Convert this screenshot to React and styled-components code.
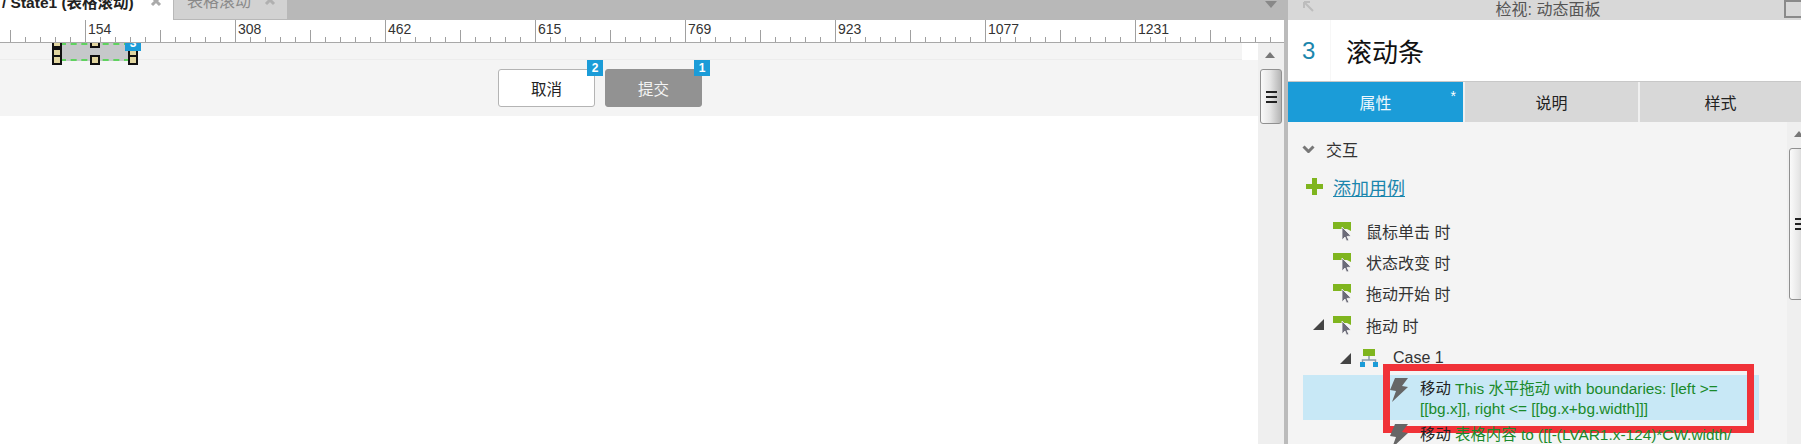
import React from "react";
import styled, { createGlobalStyle } from "styled-components";

const Global = createGlobalStyle`
  html, body { margin: 0; padding: 0; background: #fff; }
  body { font-family: "Liberation Sans", "Noto Sans CJK SC", sans-serif; }
  * { box-sizing: border-box; }
`;

const Root = styled.div`
  width: 1801px; height: 444px; overflow: hidden; display: flex; color: #222;
`;
const EditorPane = styled.div`
  width: 1288px; flex: none; display: flex; flex-direction: column;
`;
const TabBar = styled.div`
  height: 20px; flex: none; display: flex; background: #b8b8b8; overflow: hidden;
`;
const DocTab = styled.div`
  height: ${p => (p.$active ? 20 : 19)}px;
  width: ${p => p.$width}px;
  margin-right: 1px;
  flex: none;
  display: flex; align-items: flex-end; justify-content: space-between;
  padding: 0 ${p => p.$padRight}px 7px ${p => p.$padLeft}px;
  background: ${p => (p.$active ? "#fff" : "#d2d2d2")};
  color: ${p => (p.$active ? "#222" : "#8a8a8a")};
  font-size: ${p => (p.$active ? 15.5 : 16)}px; line-height: 20px; font-weight: ${p => (p.$active ? 700 : 400)};
  white-space: nowrap; overflow: hidden;
`;
const CloseGlyph = styled.svg`
  width: 12px; height: 12px; flex: none; margin-bottom: ${p => p.$lift}px; color: ${p => p.$color};
`;
const TabCaret = styled.svg`
  width: 12px; height: 7px; margin: 1px 11px 0 auto; flex: none;
`;
const EditorBody = styled.div`
  flex: 1; min-height: 0; display: flex; flex-direction: column;
  border-right: 4px solid #bbb;
`;
const RulerBar = styled.svg`
  display: block; width: 1284px; height: 23px; flex: none; position: relative; z-index: 2; background: #fff;
`;
const CanvasRow = styled.div`
  flex: 1; min-height: 0; display: flex;
`;
const Canvas = styled.div`
  flex: 1; min-width: 0; background: #fff;
`;
const WidgetBand = styled.div`
  position: relative; width: 1242px; height: 17px; background: #f4f4f4; border-bottom: 1px solid #ececec;
`;
const ButtonBand = styled.div`
  height: 56px; background: #f4f4f4; display: flex; gap: 10px; padding: 9px 0 0 498px;
`;
const Selection = styled.div`
  position: absolute; left: 60px; top: 0; width: 70px; height: 18px; background: #c6c8ca;
  border-top: 2px dashed #5fd35f; border-bottom: 2px dashed #5fd35f;
`;
const Handle = styled.span`
  position: absolute; left: ${p => p.$x}px; top: ${p => p.$y}px; width: 10px; height: 10px;
  background: #e2d6a0; border: 2px solid #111;
`;
const Badge = styled.span`
  position: absolute; width: 16px; height: 16px; background: #1b9cd8; color: #fff;
  font-size: 12px; font-weight: 700; line-height: 16px; text-align: center;
  right: ${p => p.$right}px; top: ${p => p.$top}px;
`;
const ActionButton = styled.div`
  position: relative; width: 97px; height: 38px; border-radius: 3px;
  display: flex; align-items: center; justify-content: center; font-size: 15.5px;
  background: ${p => (p.$primary ? "#929292" : "#fff")};
  color: ${p => (p.$primary ? "#f4f4f4" : "#222")};
  border: 1px solid ${p => (p.$primary ? "#929292" : "#b4b4b4")};
`;
const ScrollTrack = styled.div`
  width: 26px; flex: none; background: #efefef; position: relative; padding: 26px 0 0 2px;
`;
const ScrollArrow = styled.svg`
  position: absolute; left: 7px; top: 9px; width: 10px; height: 6px;
`;
const ScrollThumb = styled.div`
  width: 22px; height: ${p => p.$height}px; border: 1px solid #909090; border-radius: 3px;
  background: linear-gradient(90deg, #fafafa 0%, #e6e6e6 45%, #b4b4b4 100%);
  display: flex; flex-direction: column; align-items: center; justify-content: center; gap: 3px;
`;
const GripLine = styled.span`
  display: block; width: 11px; height: 2px; background: #222;
`;
const InspectorPane = styled.div`
  flex: 1; min-width: 0; display: flex; flex-direction: column; background: #f4f4f4;
`;
const InspectorHeader = styled.div`
  height: 20px; flex: none; background: #d8d8d8; display: grid;
  grid-template-columns: 1fr auto 1fr; align-items: end; padding: 0 8px 0 15px; overflow: hidden;
  font-size: 16px; line-height: 20px; color: #555;
`;
const HeaderTitle = styled.span`
  margin-bottom: 7px; white-space: nowrap;
`;
const BackGlyph = styled.svg`
  width: 11px; height: 12px; margin-bottom: 14px;
`;
const Restore = styled.span`
  justify-self: end; width: 17px; height: 18px; border: 2px solid #8a8a8a; border-right: none;
  margin: 0 -8px 9px 0;
`;
const TitleRow = styled.div`
  height: 62px; flex: none; background: #fff; display: flex; align-items: center;
  border-bottom: 1px solid #c8c8c8;
`;
const TitleNumber = styled.div`
  width: 43px; height: 100%; padding-left: 14px; color: #1b86ad; font-size: 24px;
  display: flex; align-items: center; border-right: 1px solid #f7f7f7;
`;
const TitleText = styled.div`
  margin-left: 15px; font-size: 26px; color: #111;
`;
const PanelTabs = styled.div`
  height: 40px; flex: none; display: grid; grid-template-columns: 175px 173px 1fr; gap: 2px;
  background: #f0f0f0;
`;
const PanelTab = styled.div`
  position: relative; display: flex; align-items: center; justify-content: center; font-size: 16px;
  background: ${p => (p.$active ? "#1b9cd8" : "#d8d8d8")};
  color: ${p => (p.$active ? "#eef8fd" : "#222")};
`;
const Asterisk = styled.span`
  position: absolute; right: 7px; top: 7px; color: #fff; font-size: 14px; line-height: 14px;
`;
const InspectorBody = styled.div`
  flex: 1; min-height: 0; display: flex; margin-right: -12px;
`;
const Content = styled.div`
  flex: 1; min-width: 0; padding-top: 17px;
`;
const SectionHeader = styled.div`
  height: 20px; display: flex; align-items: center; gap: 11px; padding-left: 14px;
  font-size: 16px; color: #333;
`;
const Chevron = styled.svg`
  width: 13px; height: 8px; flex: none;
`;
const AddRow = styled.div`
  height: 25px; margin-top: 15px; display: flex; align-items: center; gap: 10px; padding-left: 18px;
`;
const AddIcon = styled.svg`
  width: 17px; height: 17px; flex: none;
`;
const AddLink = styled.span`
  font-size: 18px; color: #1b86ad; text-decoration: underline;
`;
const EventList = styled.div`
  margin-top: 16px;
`;
const TreeRow = styled.div`
  height: 31.4px; display: flex; align-items: center; padding-left: ${p => p.$indent}px;
  margin-top: ${p => p.$gap || 0}px;
  font-size: 16px; color: #333; white-space: nowrap;
`;
const TreeSlot = styled.div`
  width: 20px; flex: none; display: flex; align-items: center;
`;
const Triangle = styled.svg`
  width: 11px; height: 11px; display: block;
`;
const EventGlyph = styled.svg`
  width: 18px; height: 20px; flex: none; margin-right: 15px;
`;
const ActionRow = styled.div`
  position: relative; margin: ${p => (p.$selected ? "1px 28px 1px 15px" : "0 28px 0 15px")};
  min-height: 45px; display: flex; align-items: flex-start; padding: 4px 20px 0 87px;
  background: ${p => (p.$selected ? "#c8e8f6" : "transparent")};
`;
const BoltGlyph = styled.svg`
  width: 18px; height: 24px; flex: none; margin: -1px 12px 0 0;
`;
const ActionText = styled.div`
  font-size: 15.4px; line-height: 20px; color: #1a8a2a;
  white-space: ${p => (p.$single ? "nowrap" : "normal")};
`;
const ActionVerb = styled.span`
  color: #222;
`;
const RedFrame = styled.div`
  position: absolute; left: 80px; top: -11px; width: 371px; height: 69px;
  border: 7px solid #f03238; pointer-events: none;
`;

function Close({ color, lift }) {
  return (
    <CloseGlyph $color={color} $lift={lift} viewBox="0 0 12 12">
      <path d="M2 2 L10 10 M10 2 L2 10" stroke="currentColor" strokeWidth="3" />
    </CloseGlyph>
  );
}

function Ruler() {
  const ticks = [];
  for (let x = 10; x < 1284; x += 15) {
    const step = Math.round((x - 85) / 15);
    const mod = ((step % 10) + 10) % 10;
    const major = mod === 0;
    const mid = mod === 5;
    const y1 = major ? 0 : mid ? 10 : 17;
    ticks.push(<line key={x} x1={x + 0.5} x2={x + 0.5} y1={y1} y2="22" stroke="#a0a0a0" />);
  }
  const labels = [154, 308, 462, 615, 769, 923, 1077, 1231];
  return (
    <RulerBar viewBox="0 0 1284 23">
      {ticks}
      {labels.map((l, i) => (
        <text key={l} x={88 + i * 150} y="14" fontSize="14" fill="#333" fontFamily="Liberation Sans, sans-serif">{l}</text>
      ))}
      <line x1="0" x2="1284" y1="22.5" y2="22.5" stroke="#a8a8a8" />
    </RulerBar>
  );
}

function Scrollbar({ thumb }) {
  return (
    <ScrollTrack>
      <ScrollArrow viewBox="0 0 10 6"><polygon points="5,0 10,6 0,6" fill="#777" /></ScrollArrow>
      <ScrollThumb $height={thumb}>
        <GripLine /><GripLine /><GripLine />
      </ScrollThumb>
    </ScrollTrack>
  );
}

function EventIcon() {
  return (
    <EventGlyph viewBox="0 0 18 20">
      <polygon points="0,1 18,1 18,10 14,8 0,8" fill="#7fb51e" />
      <path d="M9 6 L18 15 L14 15.5 L16 19.5 L13.5 20 L12 16 L9 19 Z" fill="#6b6b78" stroke="#f4f4f4" strokeWidth="0.8" />
    </EventGlyph>
  );
}

function CaseIcon() {
  return (
    <EventGlyph viewBox="0 0 18 20">
      <rect x="3" y="1" width="12" height="7" fill="#7fb51e" />
      <path d="M9 8 V12 M2.5 15 V12 H15.5 V15" stroke="#8a9aa8" strokeWidth="1.5" fill="none" />
      <rect x="0" y="14" width="5" height="5" fill="#1b9cd8" />
      <rect x="13" y="14" width="5" height="5" fill="#1b9cd8" />
    </EventGlyph>
  );
}

function Bolt() {
  return (
    <BoltGlyph viewBox="0 0 18 24">
      <polygon points="5,0 18,0 12,8 18,9 2,24 6,13 0,12" fill="#666" />
    </BoltGlyph>
  );
}

function Tri() {
  return (
    <Triangle viewBox="0 0 11 11"><polygon points="11,0 11,11 0,11" fill="#444" /></Triangle>
  );
}

const events = ["鼠标单击 时", "状态改变 时", "拖动开始 时"];

export default function App() {
  return (
    <Root>
      <Global />
      <EditorPane>
        <TabBar>
          <DocTab $active $width={173} $padLeft={2} $padRight={11}>
            <span>/ State1 (表格滚动)</span>
            <Close color="#aaa" lift={6} />
          </DocTab>
          <DocTab $width={113} $padLeft={13} $padRight={11}>
            <span>表格滚动</span>
            <Close color="#b0b0b0" lift={6} />
          </DocTab>
          <TabCaret viewBox="0 0 12 7"><polygon points="0,0 12,0 6,7" fill="#888" /></TabCaret>
        </TabBar>
        <EditorBody>
          <Ruler />
          <CanvasRow>
            <Canvas>
              <WidgetBand>
                <Selection>
                  <Handle $x={-8} $y={-7} />
                  <Handle $x={-8} $y={3} />
                  <Handle $x={-8} $y={10} />
                  <Handle $x={30} $y={-7} />
                  <Handle $x={30} $y={10} />
                  <Handle $x={68} $y={-7} />
                  <Handle $x={68} $y={3} />
                  <Handle $x={68} $y={10} />
                  <Badge $right={-11} $top={-10}>3</Badge>
                </Selection>
              </WidgetBand>
              <ButtonBand>
                <ActionButton>取消<Badge $right={-9} $top={-10}>2</Badge></ActionButton>
                <ActionButton $primary>提交<Badge $right={-9} $top={-10}>1</Badge></ActionButton>
              </ButtonBand>
            </Canvas>
            <Scrollbar thumb={55} />
          </CanvasRow>
        </EditorBody>
      </EditorPane>
      <InspectorPane>
        <InspectorHeader>
          <BackGlyph viewBox="0 0 11 12"><path d="M1 1 L10 10 M1 1 V7 M1 1 H7" stroke="#bdbdbd" strokeWidth="2" fill="none" /></BackGlyph>
          <HeaderTitle>检视: 动态面板</HeaderTitle>
          <Restore />
        </InspectorHeader>
        <TitleRow>
          <TitleNumber>3</TitleNumber>
          <TitleText>滚动条</TitleText>
        </TitleRow>
        <PanelTabs>
          <PanelTab $active>属性<Asterisk>*</Asterisk></PanelTab>
          <PanelTab>说明</PanelTab>
          <PanelTab>样式</PanelTab>
        </PanelTabs>
        <InspectorBody>
          <Content>
            <SectionHeader>
              <Chevron viewBox="0 0 13 8"><path d="M1.5 1.5 L6.5 6.5 L11.5 1.5" stroke="#777" strokeWidth="3" fill="none" /></Chevron>
              交互
            </SectionHeader>
            <AddRow>
              <AddIcon viewBox="0 0 17 17"><path d="M6 0 H11 V6 H17 V11 H11 V17 H6 V11 H0 V6 H6 Z" fill="#7fb51e" /></AddIcon>
              <AddLink>添加用例</AddLink>
            </AddRow>
            <EventList>
              {events.map(e => (
                <TreeRow key={e} $indent={25}>
                  <TreeSlot />
                  <EventIcon />
                  {e}
                </TreeRow>
              ))}
              <TreeRow $indent={25}>
                <TreeSlot><Tri /></TreeSlot>
                <EventIcon />
                拖动 时
              </TreeRow>
              <TreeRow $indent={52} $gap={2}>
                <TreeSlot><Tri /></TreeSlot>
                <CaseIcon />
                Case 1
              </TreeRow>
            </EventList>
            <ActionRow $selected>
              <Bolt />
              <ActionText>
                <ActionVerb>移动</ActionVerb> This 水平拖动 with boundaries: [left &gt;= [[bg.x]], right &lt;= [[bg.x+bg.width]]]
              </ActionText>
              <RedFrame />
            </ActionRow>
            <ActionRow>
              <Bolt />
              <ActionText $single>
                <ActionVerb>移动</ActionVerb> 表格内容 to ([[-(LVAR1.x-124)*CW.width/
              </ActionText>
            </ActionRow>
          </Content>
          <Scrollbar thumb={152} />
        </InspectorBody>
      </InspectorPane>
    </Root>
  );
}
